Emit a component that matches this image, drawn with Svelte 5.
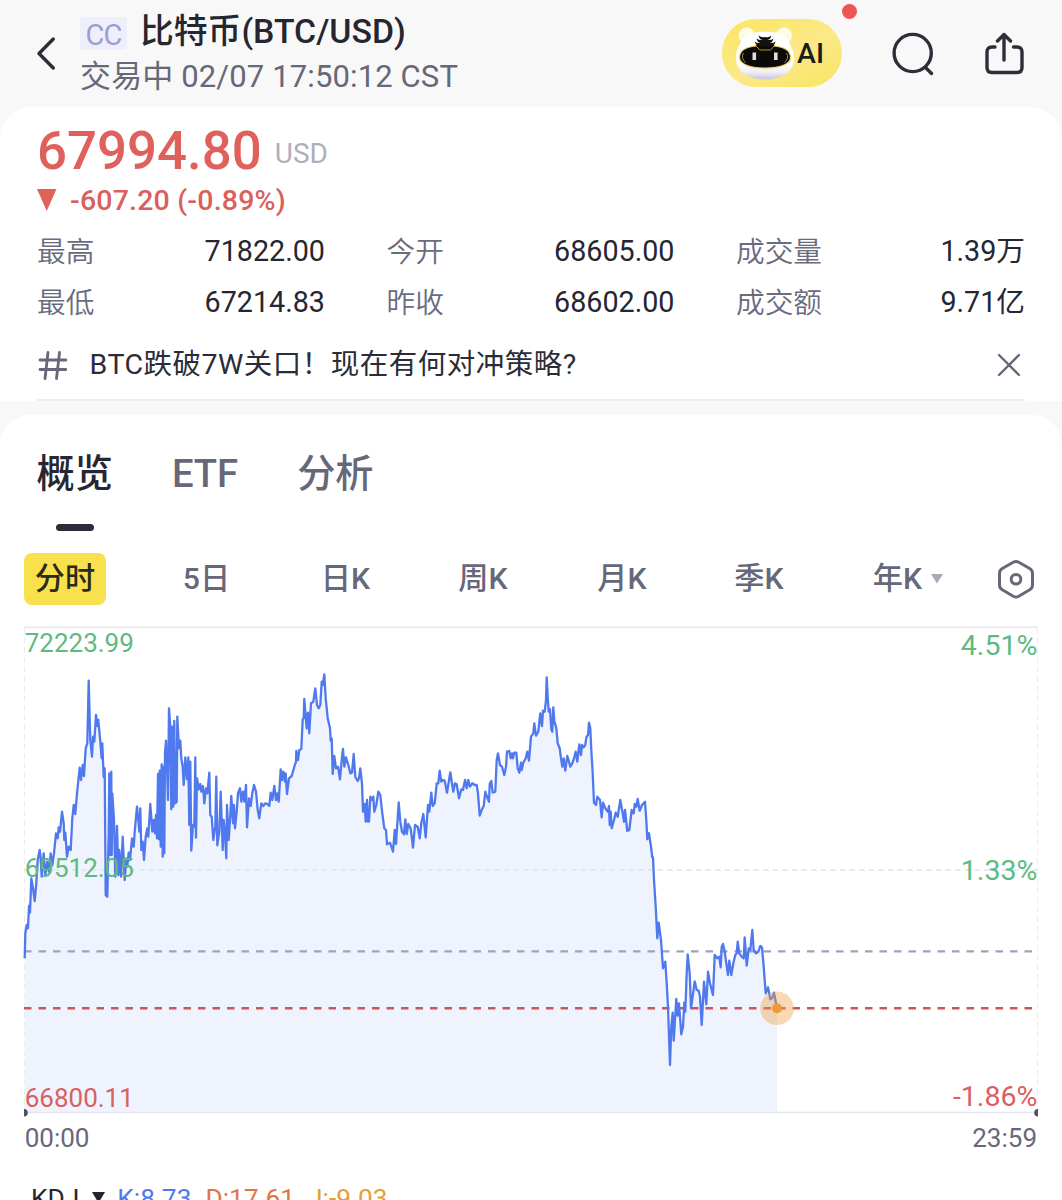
<script>
  const stats = [
    ['最高', '71822.00'], ['今开', '68605.00'], ['成交量', '1.39万'],
    ['最低', '67214.83'], ['昨收', '68602.00'], ['成交额', '9.71亿'],
  ];
  const periods = ['5日', '日K', '周K', '月K', '季K'];

  // Intraday series, in thirds of a pixel relative to each segment's origin.
  const segments = [
    { x: 10, y: 620, d: '44,1015 46,940 50,915 54,925 57,858 60,878 64,775 69,805 74,843 79,790 83,720 89,690 92,715 95,770 101,700 106,765 112,725 117,755 122,700 127,735 132,700 138,640 143,655 146,622 150,635 156,575 161,610 163,660 166,638 171,710 176,680 182,690 187,595 191,555 196,582 201,520 209,443 213,480 218,435 222,468 227,385 232,370 236,182 241,360 246,410 249,350 253,365 258,285 262,318 265,300 270,355 275,415 277,370 281,472 284,445 287,825 292,830 296,640 298,460 301,705 304,455 305,705 307,520 312,600 316,770 321,618 325,765 328,690 333,770 338,650 344,780 349,715 352,740 356,698 360,720 366,655 371,680 374,635 381,560 385,600 388,635 391,565 394,690 398,665 402,720 407,650 412,625 415,650 421,552 427,635 431,600 435,640 438,585 441,655 444,462 446,658 449,452 452,680 455,433 458,710 461,440 463,700 465,400 468,362 471,440 474,540 477,265 481,320 484,568 487,320 490,560 493,303 496,550 500,545 502,290 505,350 508,385 511,362 514,415 518,440 521,495 526,412 531,478 535,412 538,615 541,425 544,692 549,615 553,620 556,412 558,653 561,475 566,508 571,492 574,515 579,498 583,550 588,505 592,520 598,458 601,585 605,590 610,660 616,620 619,470 622,676 628,635 632,515 638,690 641,600 645,640 649,715 651,555 656,660 660,600 664,528 669,610 672,555 675,625 680,575 684,520 690,505 694,545 699,515 703,545 708,495 711,622 717,535 722,558 727,520 732,495 738,515 743,570' },
    { x: 240, y: 650, d: '58,505 64,460 70,468 76,460 82,462 88,468 92,428 97,450 103,408 108,450 112,430 116,455 122,358 126,390 130,365 135,395 137,370 141,432 147,385 155,378 163,350 168,335 169,303 174,330 178,300 184,297 188,208 191,205 193,147 197,200 200,235 204,188 208,250 213,160 220,155 226,115 231,165 236,175 241,165 245,95 248,105 253,73 257,145 263,205 270,235 272,272 275,265 278,372 283,318 288,355 294,350 300,388 306,320 309,297 313,350 318,322 325,345 331,370 336,368 341,312 346,380 353,393 357,385 361,355 366,400 369,485 374,462 377,515 381,450 384,515 387,515 391,440 397,450 400,440 403,485 409,465 415,425 421,435 427,490 433,535 438,540 441,583 450,578 459,605 464,540 468,582 476,457 481,515 486,545 492,553 496,508 500,552 505,522 512,535 519,593 525,525 533,530 539,565 544,520 550,492 557,562 564,465 568,485 574,428 578,468 584,460 590,400 595,400 599,362 604,395 608,390 614,392 621,428 631,367 640,425 645,400 650,403 657,445 664,418 669,420 675,390 680,415 685,390 690,410 697,400 704,405 710,405 714,430 719,497' },
    { x: 480, y: 650, d: '5,480 11,468 16,425 21,440 27,455 29,402 34,393 38,428 46,425 50,330 54,310 60,345 66,350 73,375 78,350 81,305 88,303 92,325 96,310 99,325 103,308 109,308 113,355 118,368 123,338 125,360 130,338 137,325 142,305 147,332 153,260 160,250 163,220 168,257 175,245 181,190 186,228 189,182 194,185 198,150 200,82 203,140 206,185 210,178 214,238 217,245 220,172 223,212 229,235 233,280 239,295 243,325 247,350 251,325 256,362 262,318 267,335 271,350 277,340 282,325 287,305 292,335 298,283 303,315 306,285 311,292 316,285 319,262 324,255 327,218 331,235 334,300 338,370 342,458 348,465 352,440 360,450 365,502 369,458 376,475 383,485 387,468 389,525 392,485 395,535 402,510 407,488 413,500 421,450 428,490 432,515 435,480 442,543 448,540 455,480 461,490 464,462 469,470 473,447 479,482 486,465 495,455 499,510 502,568 507,550 513,590 517,622 519,622 522,690' },
    { x: 630, y: 840, d: '77,200 82,295 86,248 93,300 99,385 106,365 110,430 114,500 120,675 124,560 128,518 131,602 139,477 143,527 147,490 154,583 159,560 163,488 166,515 170,400 173,343 179,400 183,505 190,455 194,424 200,450 206,452 210,470 215,555 222,425 229,493 234,395 240,430 249,465 254,345 262,355 268,350 272,382 275,320 279,312 284,335 289,370 294,405 298,362 304,405 310,370 316,345 320,340 323,305 328,340 335,350 341,355 344,292 350,377 356,325 361,330 367,270 371,330 378,340 385,335 391,318 396,322 401,380 407,460 414,442 421,478 426,475 432,458 438,490 441,505' },
  ];
  const line = segments
    .flatMap((s) => s.d.split(' ').map((p) => {
      const [x, y] = p.split(',').map(Number);
      return `${(s.x + x / 3).toFixed(1)},${(s.y + y / 3).toFixed(1)}`;
    }))
    .join(' ');
  const area = `${line} 777,1112 24.5,1112`;
</script>

<div class="screen">
  <header>
    <svg class="back" width="20" height="36" viewBox="0 0 20 36"><path d="M17.3 4 3 18.5 17.3 33" /></svg>
    <div class="heading">
      <div class="title"><span class="badge">CC</span><h1>比特币(BTC/USD)</h1></div>
      <div class="status">交易中 02/07 17:50:12 CST</div>
    </div>
    <div class="ai">
      <svg width="62" height="60" viewBox="0 0 62 60">
        <defs>
          <linearGradient id="fur" x1="0" y1="0" x2="0" y2="1">
            <stop offset="0.65" stop-color="#fff" /><stop offset="0.85" stop-color="#efeef5" /><stop offset="1" stop-color="#c6c4da" />
          </linearGradient>
        </defs>
        <circle cx="12.500" cy="13.500" r="8" fill="#fffbe6" /><circle cx="50" cy="13.500" r="8" fill="#fffbe6" />
        <path d="M31 10C42 9 53 12 56 22c1 4 4 6 4 14 0 14-12 21.500-29 21.500S2 50 2 36c0-8 2-10 4-14C9 12 20 9 31 10Z" fill="url(#fur)" />
        <path d="M22 24h18c9 1 16.500 4 16.500 11.500C56.500 42 46 46 31 46S5.500 42 5.500 35.500C5.500 28 13 25 22 24Z" fill="#0b0a08" stroke="#eccf52" stroke-width="1.200" />
        <path d="M21.500 23.500 26 28h10.500l4-4.500-3-2.500H25Z" fill="#0b0a08" stroke="#d9b83a" stroke-width="0.800" />
        <path d="M24.500 13.500q3 2.500 6.500 1.500q4 1 6.500-1.500-1 4-4 4.500 4 .5 6-1.500-1 4-4 4.500 4 .3 6-1.500-1 4-4 4.500H25.500q-4-1-5-4.500 2.500 2 6 1.500-3-.5-4-4.500 2.500 2 6 1.500-3-.5-4-4.500Z" fill="#141310" />
        <rect x="18.500" y="30.500" width="3.600" height="7.500" fill="#dedede" /><rect x="40" y="30.500" width="3.600" height="7.500" fill="#dedede" />
        <path d="M9.500 31q-3 5 2 9.500M52.500 31q3 5-2 9.500" fill="none" stroke="#aaa" stroke-width="0.800" />
      </svg>
      <span>AI</span>
      <i class="dot"></i>
    </div>
    <svg class="search" width="46" height="46" viewBox="0 0 46 46"><circle cx="22.700" cy="23" r="18.600" /><path d="M35.500 37.500l6 6" /></svg>
    <svg class="share" width="42" height="46" viewBox="0 0 42 46"><path d="M11 17H8q-5 0-5 5v15.500q0 5 5 5h25q5 0 5-5V22q0-5-5-5h-3.500M20 30V5M13.500 11l6.500-6.500 6.500 6.500" /></svg>
  </header>

  <section class="quote">
    <div class="price"><b>67994.80</b><span>USD</span></div>
    <div class="change">
      <svg width="20" height="22" viewBox="0 0 20 22"><path d="M0 0H19.500L9.750 22Z" /></svg>
      <span>-607.20 (-0.89%)</span>
    </div>
    <div class="stats">
      {#each stats as [label, value]}
        <div><span>{label}</span><em>{value}</em></div>
      {/each}
    </div>
    <div class="topic">
      <svg width="30" height="30" viewBox="0 0 30 30"><path d="M3 10h26M3 19.500h26M11 2.500 8 28.500M22.500 2.500 19.500 28.500" /></svg>
      <span>BTC跌破7W关口！现在有何对冲策略?</span>
      <svg class="close" width="24" height="24" viewBox="0 0 24 24"><path d="M2 2 22 22M22 2 2 22" /></svg>
    </div>
  </section>

  <section class="detail">
    <nav class="tabs">
      <span class="active">概览</span><span>ETF</span><span>分析</span>
    </nav>
    <nav class="periods">
      <span class="on">分时</span>
      {#each periods as p}<span>{p}</span>{/each}
      <span>年K<svg width="12" height="10" viewBox="0 0 12 10"><path d="M0 0H12L6 9.500Z" fill="#a9a9b8" /></svg></span>
      <svg class="gear" width="38" height="42" viewBox="0 0 38 42">
        <path d="M16.200 3.200Q19 1.600 21.800 3.200L32.700 9.500Q35.500 11.200 35.500 14.400V26Q35.500 29.200 32.700 30.800L21.800 37.200Q19 38.800 16.200 37.200L5.300 30.800Q2.500 29.200 2.500 26V14.400Q2.500 11.200 5.300 9.500Z" />
        <circle cx="19" cy="20.200" r="4.800" />
      </svg>
    </nav>

    <svg class="chart" width="1062" height="534" viewBox="0 620 1062 534">
      <polygon points={area} fill="#eff3fe" />
      <g fill="none" stroke="#ececef" stroke-width="1.500">
        <path d="M24 627.300H1038" stroke-width="2" />
        <path d="M24.500 628V1112M1037.500 628V1112" stroke-dasharray="6 3.600" stroke-width="1" />
        <path d="M24 870H1038" stroke="#e2e4ea" stroke-dasharray="5.500 4.100" />
        <path d="M24 1112.500H1038" stroke="#e6e6f0" />
      </g>
      <path d="M24 951.300H1032" stroke="#9ea1bb" stroke-width="2.300" stroke-dasharray="7.500 7" />
      <path d="M24 1008.300H1032" stroke="#cf5459" stroke-width="2.400" stroke-dasharray="7.500 7" />
      <polyline points={line} fill="none" stroke="#5079ee" stroke-width="2.300" stroke-linejoin="round" />
      <circle cx="777" cy="1008.300" r="16.800" fill="#f0a040" fill-opacity="0.4" />
      <circle cx="777" cy="1008.300" r="5" fill="#ec9a3c" />
      <path d="M24 1109a3.800 3.800 0 0 1 0 7.600ZM1038 1109a3.800 3.800 0 0 0 0 7.600Z" fill="#50505e" />
      <g class="axis">
        <g class="up">
          <text x="24.700" y="652">72223.99</text><text x="24.700" y="876.500">69512.05</text>
          <text class="pct" x="1037.300" y="654.500">4.51%</text><text class="pct" x="1037.300" y="879.500">1.33%</text>
        </g>
        <g class="down"><text x="24.700" y="1106.500">66800.11</text><text class="pct" x="1037.300" y="1105.700">-1.86%</text></g>
        <g class="time"><text x="24.700" y="1147">00:00</text><text class="end" x="1037" y="1147">23:59</text></g>
      </g>
    </svg>

    <div class="kdj">
      <span class="name">KDJ</span>
      <svg width="13" height="11" viewBox="0 0 13 11"><path d="M0 0H13L6.500 11Z" fill="#23242e" /></svg>
      <span class="k">K:8.73</span><span class="d">D:17.61</span><span class="j">J:-9.03</span>
    </div>
  </section>
</div>

<style>
  :global(body) { margin: 0; background: #fff; }
  .screen {
    width: 1062px; height: 1200px; overflow: hidden; background: #f8f8f8;
    font-family: Roboto, "Noto Sans CJK SC", sans-serif; color: #252631; white-space: nowrap;
  }
  svg { flex: none; display: block; }
  header { height: 107px; display: flex; box-sizing: border-box; padding-left: 36px; }
  .back { margin: 35px 24px 0 0; fill: none; stroke: #2b2c37; stroke-width: 3.4; stroke-linecap: round; stroke-linejoin: round; }
  .heading { width: 642px; padding-top: 10px; }
  .title { display: flex; height: 44px; align-items: center; }
  .badge {
    width: 47px; height: 33px; margin: 3px 13px 0 0; border-radius: 3px; background: #efeffb;
    color: #9b9fd0; font-size: 29px; line-height: 36px; text-align: center; letter-spacing: -1px;
  }
  h1 { margin: 0; font-size: 33.8px; line-height: 44px; font-weight: 500; }
  .status { font-size: 31px; line-height: 45px; color: #666879; letter-spacing: 0.13px; }
  .ai {
    position: relative; width: 120px; height: 68px; margin-top: 19px; border-radius: 34px;
    background: linear-gradient(155deg, #fbe65f, #fbe98a 55%, #f9e45c); display: flex; box-sizing: border-box; padding-left: 12px;
  }
  .ai svg { margin-top: 3px; }
  .ai span { font-size: 28.5px; font-weight: 500; line-height: 69px; color: #1d1c18; margin-left: 1px; }
  .dot { position: absolute; right: -15px; top: -15px; width: 15px; height: 15px; border-radius: 50%; background: #ec5654; }
  .search, .share { fill: none; stroke: #2d2e3a; stroke-width: 3.4; stroke-linecap: round; stroke-linejoin: round; }
  .search { margin: 30px 0 0 48px; }
  .share { margin: 30px 0 0 48px; }

  .quote { height: 294px; box-sizing: border-box; background: #fff; border-radius: 32px 32px 0 0; padding: 16px 37px 0; }
  .price { display: flex; height: 56px; align-items: center; color: #e0605c; }
  .price b { font-size: 52.8px; font-weight: 500; line-height: 56px; }
  .price span { margin: 4px 0 0 13px; font-size: 28px; color: #aeafbb; }
  .change { display: flex; align-items: center; height: 40px; gap: 13px; color: #d9605c; margin-top: 1px; }
  .change svg { fill: #e0605c; }
  .change span { font-size: 28.5px; font-weight: 500; letter-spacing: 0.2px; }
  .stats { display: grid; grid-template-columns: 288px 288px 289px; column-gap: 61.5px; grid-auto-rows: 50.5px; margin-top: 6px; }
  .stats div { display: flex; justify-content: space-between; font-size: 28.7px; line-height: 51.5px; }
  .stats span { color: #6a6b7d; font-size: 28.7px; font-weight: 350; line-height: 53.5px; }
  .stats em { font-style: normal; }
  .topic { display: flex; align-items: center; height: 68px; border-bottom: 2px solid #eeeeef; color: #2b2c37; margin-top: 4px; }
  .topic svg { fill: none; stroke: #666879; stroke-width: 2.8; stroke-linecap: round; }
  .topic span { margin-left: 22.5px; font-size: 28.5px; line-height: 68px; letter-spacing: 0.5px; }
  .topic .close { margin: 0 4px 0 auto; stroke-width: 2.4; }

  .detail { margin-top: 14px; height: 785px; background: #fff; border-radius: 30px 30px 0 0; overflow: hidden; }
  .tabs { display: flex; gap: 59px; padding: 33px 0 0 36.5px; height: 83px; font-size: 38.2px; line-height: 53px; font-weight: 500; color: #666879; }
  .tabs span { height: 83px; }
  .tabs .active { color: #262732; display: flex; flex-direction: column; align-items: center; }
  .tabs .active::after { content: ""; width: 38px; height: 7px; margin-top: 22.5px; border-radius: 4px; background: #2b2c3a; }
  .periods { display: grid; grid-template-columns: 82px 201px 77px 198px 80px 194px 104px 1fr; padding: 22px 0 0 24px; font-size: 30.2px; line-height: 52px; font-weight: 500; color: #666879; height: 52px; }
  .periods span { text-align: center; display: flex; justify-content: center; align-items: center; }
  .periods .on { background: #f8e14c; border-radius: 8px; color: #2b2a1d; }
  .periods span svg { margin-left: 9px; }
  .gear { justify-self: end; margin: 6px 27px 0 0; fill: none; stroke: #666879; stroke-width: 3; }
  .chart { margin-top: 15px; }
  .axis { font-size: 26px; }
  .up { fill: #5dba80; }
  .down { fill: #d8605f; }
  .time { fill: #666879; }
  .pct { font-size: 28.5px; text-anchor: end; }
  .end { text-anchor: end; }
  .kdj { display: flex; padding-left: 31px; font-size: 26.3px; line-height: 46px; height: 46px; margin-top: 21px; }
  .kdj svg { margin: 17px 12px 0 13px; }
  .k { color: #5079ee; } .d { color: #e07545; margin-left: 14px; } .j { color: #e5a035; margin-left: 13px; }
</style>
